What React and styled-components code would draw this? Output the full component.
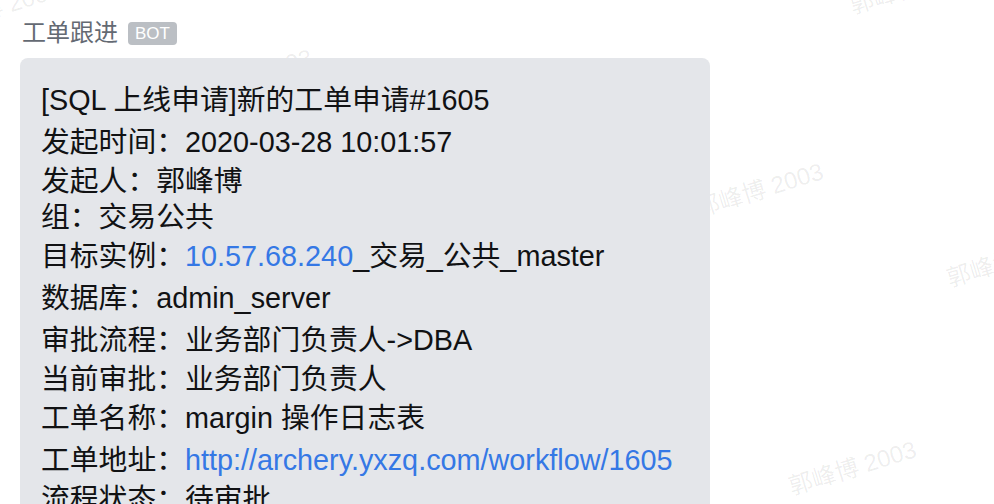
import React from "react";
import styled, { createGlobalStyle } from "styled-components";

const Global = createGlobalStyle`
  html, body {
    margin: 0;
    padding: 0;
    background: #ffffff;
    overflow: hidden;
  }
  body {
    font-family: "Liberation Sans", "Noto Sans CJK SC", sans-serif;
  }
`;

const Page = styled.div`
  position: relative;
  width: 994px;
  height: 504px;
  overflow: hidden;
  box-sizing: border-box;
  padding: 21px 0 0 20px;
`;

const WatermarkLayer = styled.div`
  position: absolute;
  inset: 0;
  pointer-events: none;
`;

const Watermark = styled.span`
  position: absolute;
  left: ${(p) => p.$x - 1}px;
  top: ${(p) => p.$y - 23}px;
  font-family: "Liberation Sans", "Noto Sans CJK SC", sans-serif;
  font-size: 24px;
  line-height: 24px;
  color: rgba(0, 0, 0, 0.075);
  white-space: nowrap;
  transform: rotate(-17deg);
  transform-origin: 0 100%;
`;

const Content = styled.div`
  position: relative;
`;

const Header = styled.div`
  display: flex;
  align-items: center;
  gap: 10px;
  height: 24px;
  padding-left: 2px;
`;

const Title = styled.span`
  font-size: 24px;
  line-height: 24px;
  color: #646a73;
`;

const Badge = styled.span`
  display: inline-flex;
  align-items: center;
  height: 23px;
  padding: 0 7px;
  border-radius: 4px;
  background: #bbbfc4;
  color: #ffffff;
  font-size: 17px;
  line-height: 23px;
`;

const Bubble = styled.div`
  margin-top: 13px;
  width: 690px;
  box-sizing: border-box;
  background: #e4e6ea;
  border-radius: 8px;
  padding: 21px 20px 20px 21px;
`;

const Line = styled.div`
  font-size: 28.8px;
  line-height: ${(p) => (p.$tall ? 42 : 36)}px;
  height: ${(p) => (p.$tall ? 42 : 36)}px;
  color: #111214;
  white-space: nowrap;
`;

const Link = styled.span`
  color: #3578e5;
`;

const marks = [
  [190, 106],
  [701, 220],
  [855, 17],
  [952, 290],
  [794, 498],
  [-62, 38],
];

export default function App() {
  return (
    <>
      <Global />
      <Page>
        <WatermarkLayer>
          {marks.map(([x, y], i) => (
            <Watermark key={i} $x={x} $y={y}>
              郭峰博 2003
            </Watermark>
          ))}
        </WatermarkLayer>
        <Content>
          <Header>
            <Title>工单跟进</Title>
            <Badge>BOT</Badge>
          </Header>
          <Bubble>
            <Line $tall>[SQL 上线申请]新的工单申请#1605</Line>
            <Line $tall>发起时间：2020-03-28 10:01:57</Line>
            <Line>发起人：郭峰博</Line>
            <Line>组：交易公共</Line>
            <Line $tall>
              目标实例：<Link>10.57.68.240</Link>_交易_公共_master
            </Line>
            <Line $tall>数据库：admin_server</Line>
            <Line $tall>审批流程：业务部门负责人-&gt;DBA</Line>
            <Line>当前审批：业务部门负责人</Line>
            <Line $tall>工单名称：margin 操作日志表</Line>
            <Line $tall>
              工单地址：<Link>http://archery.yxzq.com/workflow/1605</Link>
            </Line>
            <Line>流程状态：待审批</Line>
            <Line>执行方式：定时执行</Line>
          </Bubble>
        </Content>
      </Page>
    </>
  );
}
